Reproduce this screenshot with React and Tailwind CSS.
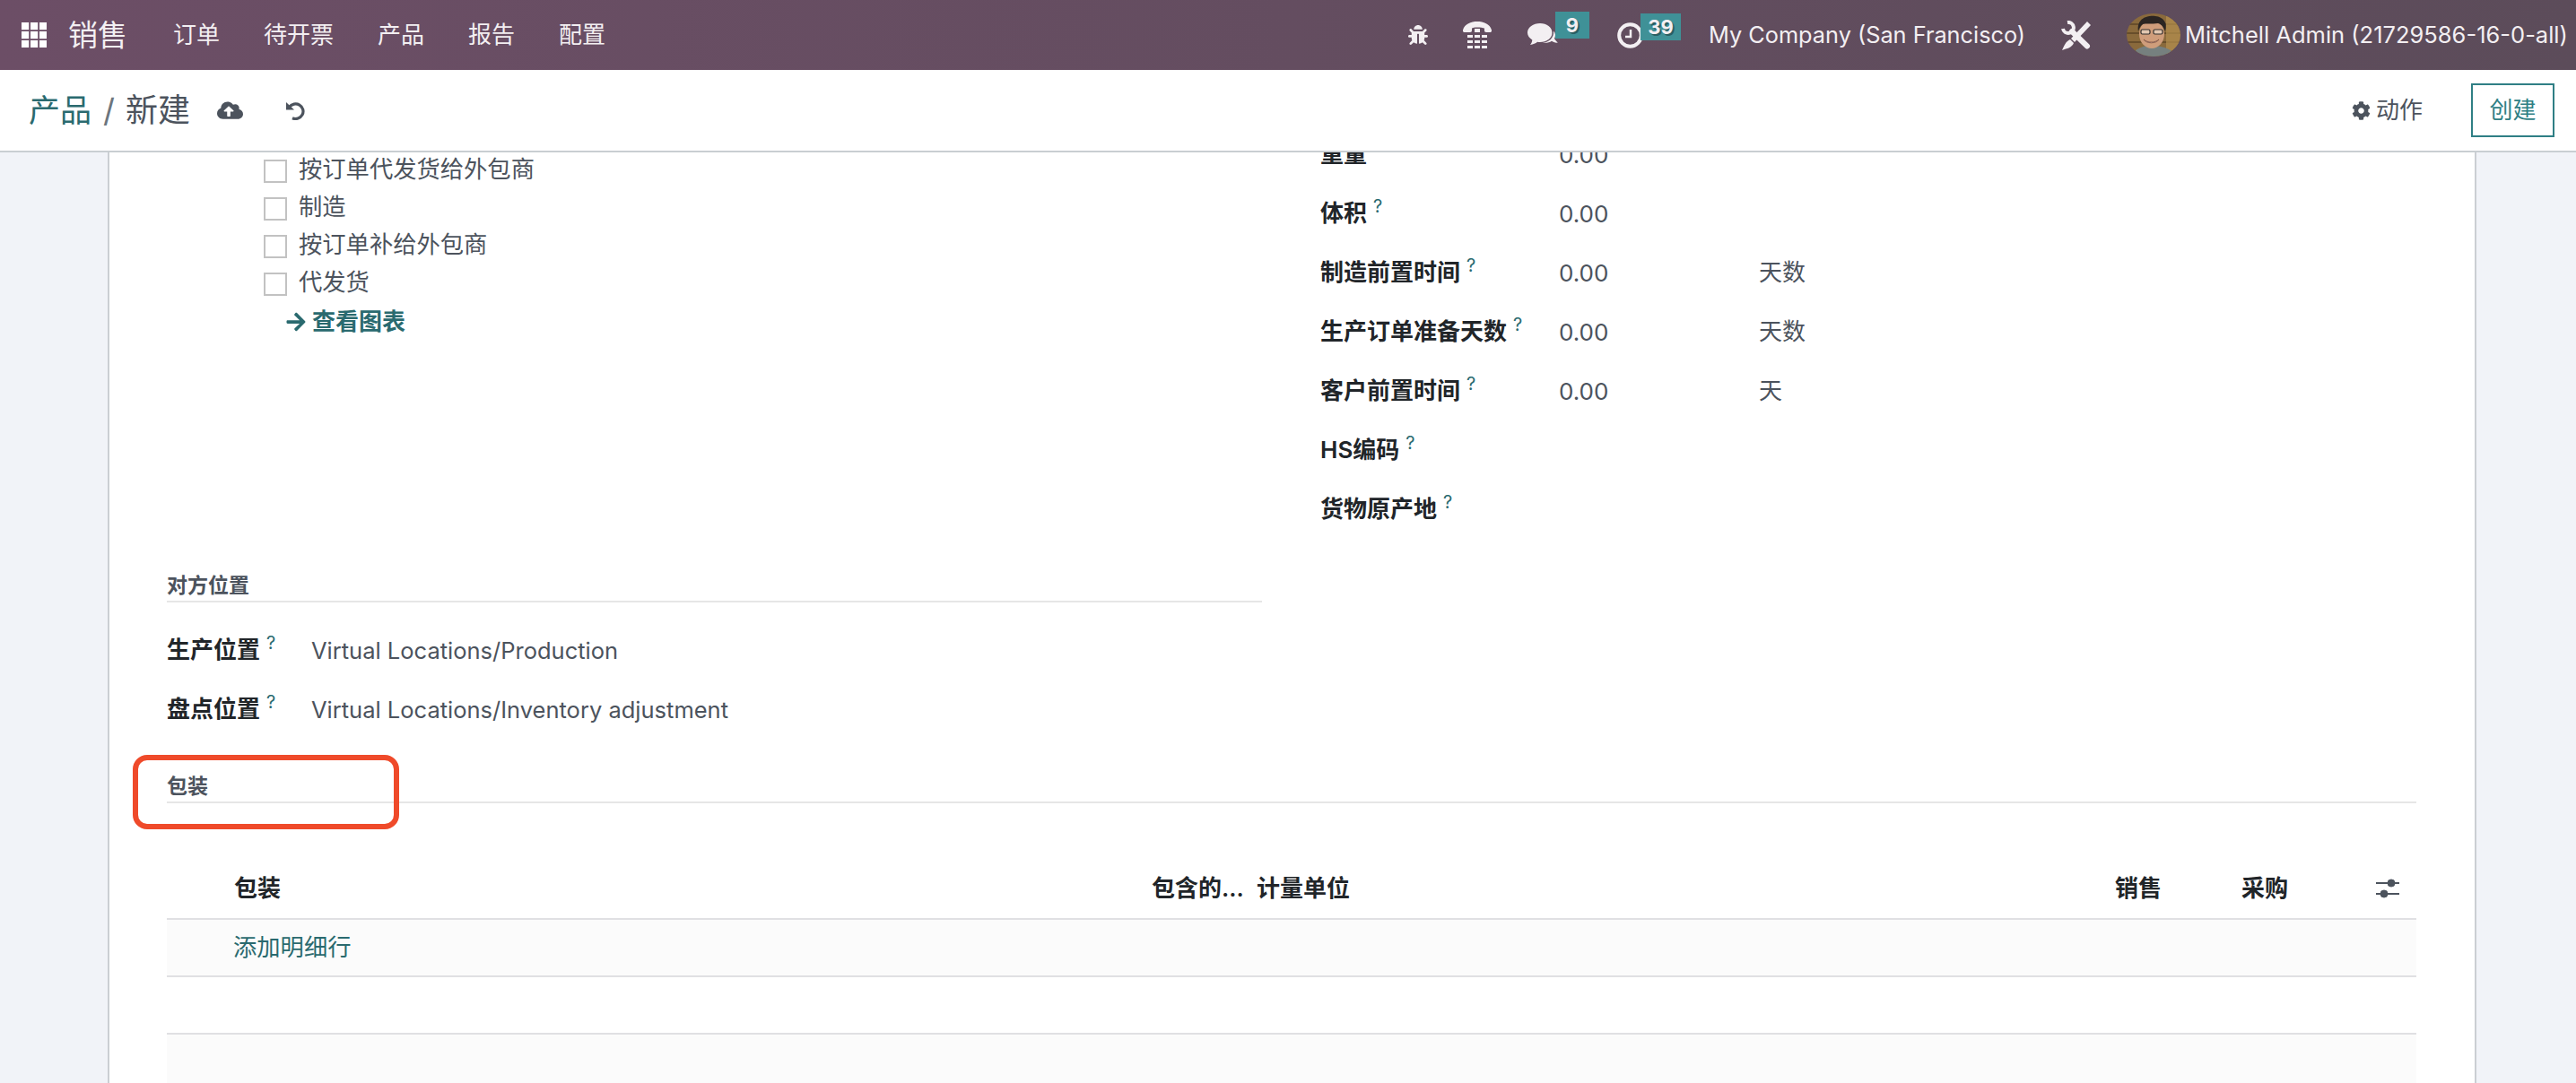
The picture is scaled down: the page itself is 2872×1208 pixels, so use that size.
import React from "react";
import { FaBug, FaCog, FaCloudUploadAlt, FaArrowRight } from "react-icons/fa";

function Help() {
  return <sup className="ml-[7px] text-[20px] font-normal text-[#2a6a6f]">?</sup>;
}

function GridIcon() {
  const cells = [0, 10, 20];
  return (
    <svg width="28" height="28" viewBox="0 0 28 28" fill="#ffffff" className="shrink-0">
      {cells.map((y) => cells.map((x) => <rect key={`${x}-${y}`} x={x} y={y} width="8.200" height="8.200" />))}
    </svg>
  );
}

function PhoneIcon() {
  const xs = [5, 13, 21];
  const ys = [15, 21, 27];
  return (
    <svg width="32" height="30" viewBox="0 0 32 30" fill="#f3eff2" className="shrink-0">
      <path d="M0 9.500C2 2.500 9 0 16 0s14 2.500 16 9.500c.3 1.500-.5 2.500-2 2.500h-4c-1.500 0-2-1-2-2V7.500C21 6 11 6 10 7.500V10c0 1-.5 2-2 2H2c-1.500 0-2.300-1-2-2.500z" />
      <rect x="13" y="8" width="6" height="4" />
      {ys.map((y) => xs.map((x) => <rect key={`${x}-${y}`} x={x} y={y} width="6" height="3" />))}
    </svg>
  );
}

function CommentsIcon() {
  return (
    <svg width="34" height="26" viewBox="0 0 34 26" fill="#f3eff2" className="shrink-0">
      <path d="M14 0C21.500 0 27.500 4.500 27.500 10.500S21.500 21 14 21c-1 0-2-.1-3-.2C9 22.500 6.500 23.500 3 24c1.300-1.500 2.200-3.300 2.300-5.500C2.100 16.500 0 13.700 0 10.500 0 4.500 6.500 0 14 0z" />
      <path d="M29 8.500C31.500 11 31.500 14.500 30 17c1 1.500 2 3 4 4.500-2.500 .5-5-.2-7-1.700-3 2-7 2.500-10 1.700 7-.5 12.500-5 12-12.500z" />
    </svg>
  );
}

function ClockIcon() {
  return (
    <svg width="29" height="29" viewBox="0 0 29 29" fill="none" stroke="#f3eff2" className="shrink-0">
      <circle cx="14.500" cy="14.500" r="12.300" strokeWidth="4" />
      <path d="M15 8v8H9" strokeWidth="2.500" />
    </svg>
  );
}

function ToolsIcon() {
  return (
    <svg width="34" height="33" viewBox="0 0 34 33" className="shrink-0" fill="#f3eff2">
      <path d="M7 2A6 6 0 1 1 2 9" fill="none" stroke="#f3eff2" strokeWidth="4" />
      <path d="M12 12L29 28.500" fill="none" stroke="#f3eff2" strokeWidth="6" strokeLinecap="round" />
      <path d="M29 1L33 5L15 24L11 20Z" />
      <path d="M10 21L14 25C12 30 7 31 1 33C3 29 5 23 10 21Z" />
    </svg>
  );
}

function Avatar() {
  return (
    <svg width="60" height="48" viewBox="0 0 60 48" className="shrink-0">
      <defs>
        <clipPath id="avatarClip"><ellipse cx="30" cy="24" rx="30" ry="24" /></clipPath>
      </defs>
      <g clipPath="url(#avatarClip)">
        <rect width="60" height="48" fill="#8a6a3c" />
        <path d="M0 12H60M0 22H60M0 32H60M0 42H60" stroke="#5d4526" strokeWidth="1.500" />
        <rect x="44" width="16" height="48" fill="#b5904f" opacity="0.7" />
        <path d="M6 48C8 39 18 36 28 36s24 3 26 12z" fill="#76807f" />
        <ellipse cx="28" cy="23" rx="14" ry="16" fill="#cf9d7b" />
        <path d="M13 20C11 6 22 2 32 3c9 1 14 7 11 17-2-5-4-8-8-9-7 1-14 0-17 1-3 2-4 5-5 8z" fill="#2b2522" />
        <rect x="16" y="18" width="10" height="5" rx="1.500" fill="#e2c7b0" stroke="#33302e" strokeWidth="1.200" />
        <rect x="30" y="18" width="10" height="5" rx="1.500" fill="#e2c7b0" stroke="#33302e" strokeWidth="1.200" />
        <path d="M19 29c4 4 13 4 17 0-3 5-14 5-17 0z" fill="#fff" stroke="#7a4a3a" strokeWidth="0.800" />
      </g>
    </svg>
  );
}

function UndoIcon() {
  return (
    <svg width="24" height="21" viewBox="0 0 24 21" fill="none" className="shrink-0">
      <path d="M5.500 6.500A8.500 8.300 0 1 1 9 18.800" stroke="#4c535d" strokeWidth="3.200" />
      <path d="M2 1V9.500H11Z" fill="#4c535d" />
    </svg>
  );
}

function SlidersIcon() {
  return (
    <svg width="26" height="22" viewBox="0 0 26 22" fill="#4c535d" stroke="#4c535d" className="shrink-0">
      <path d="M0 5H26M0 17H26" strokeWidth="2" />
      <circle cx="17" cy="5" r="4" />
      <circle cx="9" cy="17" r="4" />
    </svg>
  );
}

function TopBar() {
  const menus = ["订单", "待开票", "产品", "报告", "配置"];
  return (
    <header className="flex h-[78px] shrink-0 items-center justify-between bg-linear-to-r from-[#6c4e66] to-[#5c4c5a] pl-[24px] pr-[1px] text-[#f3eff2]">
      <div className="flex items-center">
        <GridIcon />
        <span className="ml-[24px] text-[33px] leading-none">销售</span>
        <nav className="ml-[51px] flex gap-[49px] text-[26px] leading-none">
          {menus.map((m) => <span key={m}>{m}</span>)}
        </nav>
      </div>
      <div className="flex items-center">
        <FaBug size={22} />
        <div className="ml-[39px]"><PhoneIcon /></div>
        <div className="relative ml-[40px] flex">
          <CommentsIcon />
          <span className="absolute -top-[13px] left-[31px] flex h-[30px] w-[38px] items-center justify-center bg-[#3f9197] text-[22px] font-bold leading-none [text-shadow:2px_2px_0_#2a5f63]">9</span>
        </div>
        <div className="relative ml-[66px] flex">
          <ClockIcon />
          <span className="absolute -top-[10px] left-[26px] flex h-[30px] w-[45px] items-center justify-center bg-[#3f9197] text-[22px] font-bold leading-none [text-shadow:2px_2px_0_#2a5f63]">39</span>
        </div>
        <span className="ml-[73px] w-[353px] whitespace-nowrap text-[25.300px] leading-none">My Company (San Francisco)</span>
        <div className="ml-[40px]"><ToolsIcon /></div>
        <div className="ml-[39px]"><Avatar /></div>
        <span className="ml-[5px] w-[435px] whitespace-nowrap text-[25.500px] leading-none">Mitchell Admin (21729586-16-0-all)</span>
      </div>
    </header>
  );
}

function Toolbar() {
  return (
    <div className="flex h-[92px] shrink-0 items-center justify-between border-b-2 border-[#c9ced2] bg-white pl-[32px] pr-[24px]">
      <div className="flex items-center">
        <span className="text-[35px] leading-none text-[#2a6a6f]">产品</span>
        <span className="ml-[13px] text-[36px] leading-none text-[#6c757d]">/</span>
        <span className="ml-[12px] text-[36px] leading-none text-[#4c535d]">新建</span>
        <FaCloudUploadAlt className="ml-[30px] text-[#4c535d]" size={29} preserveAspectRatio="none" style={{ height: 22 }} />
        <div className="ml-[46px]"><UndoIcon /></div>
      </div>
      <div className="flex items-center">
        <FaCog className="ml-[2px] text-[#4c535d]" size={21} />
        <span className="ml-[6px] text-[26px] leading-none text-[#4c535d]">动作</span>
        <button className="ml-[54px] flex h-[60px] w-[93px] items-center justify-center border-2 border-[#2f7f85] bg-white text-[26px] leading-none text-[#2f7f85]">创建</button>
      </div>
    </div>
  );
}

function CheckRow({ label }) {
  return (
    <div className="flex h-[42px] items-center pl-[108px]">
      <span className="box-border h-[26px] w-[26px] shrink-0 border-2 border-[#c2c2c2] bg-white" />
      <span className="ml-[13px] pb-[3px] text-[26.300px] leading-none text-[#4c535d]">{label}</span>
    </div>
  );
}

function FieldRow({ label, value, unit }) {
  return (
    <div className="grid h-[66px] grid-cols-[266px_223px_1fr] items-center text-[26px] leading-none">
      <span className="whitespace-nowrap font-semibold text-[#212529]">{label}<Help /></span>
      <span className="pt-[1px] text-[#4c535d]">{value}</span>
      <span className="text-[#4c535d]">{unit}</span>
    </div>
  );
}

function LocationRow({ label, value }) {
  return (
    <div className="grid h-[66px] grid-cols-[161px_1fr] items-center leading-none">
      <span className="whitespace-nowrap text-[26px] font-semibold text-[#212529]">{label}<Help /></span>
      <span className="whitespace-nowrap pt-[1px] text-[25.500px] text-[#4c535d]">{value}</span>
    </div>
  );
}

function SectionTitle({ children }) {
  return (
    <div className="flex h-[36px] items-center border-b-2 border-[#e6e6e6] text-[23px] font-semibold leading-none text-[#4c535d]">
      {children}
    </div>
  );
}

function UpperSection() {
  const fields = [
    { label: "体积", value: "0.00", unit: "" },
    { label: "制造前置时间", value: "0.00", unit: "天数" },
    { label: "生产订单准备天数", value: "0.00", unit: "天数" },
    { label: "客户前置时间", value: "0.00", unit: "天" },
    { label: "HS编码", value: "", unit: "" },
    { label: "货物原产地", value: "", unit: "" },
  ];
  return (
    <div className="flex items-start">
      <div className="w-[1221px] shrink-0">
        <CheckRow label="按订单代发货给外包商" />
        <CheckRow label="制造" />
        <CheckRow label="按订单补给外包商" />
        <CheckRow label="代发货" />
        <div className="flex h-[42px] items-center pl-[132px] text-[#2a6a6f]">
          <FaArrowRight size={24} />
          <span className="ml-[6px] text-[26px] font-semibold leading-none">查看图表</span>
        </div>
        <div className="mt-[256px]"><SectionTitle>对方位置</SectionTitle></div>
        <div className="mt-[20px]">
          <LocationRow label="生产位置" value="Virtual Locations/Production" />
          <LocationRow label="盘点位置" value="Virtual Locations/Inventory adjustment" />
        </div>
      </div>
      <div className="ml-[65px] -mt-[31px] flex-1">
        <div className="grid h-[66px] grid-cols-[266px_223px_1fr] items-center text-[26px] leading-none">
          <span className="font-semibold text-[#212529]">重量</span>
          <span className="pt-[1px] text-[#4c535d]">0.00</span>
          <span />
        </div>
        {fields.map((f) => <FieldRow key={f.label} {...f} />)}
      </div>
    </div>
  );
}

function PackagingTable() {
  return (
    <div className="mt-[62px]">
      <div className="box-content grid h-[66px] grid-cols-[1098px_117px_957px_141px_149px_1fr] items-center border-b-2 border-[#e0e0e3] text-[26px] font-semibold leading-none text-[#212529]">
        <span className="pl-[75px]">包装</span>
        <span>包含的...</span>
        <span>计量单位</span>
        <span>销售</span>
        <span>采购</span>
        <div className="pl-[1px]"><SlidersIcon /></div>
      </div>
      <div className="box-content flex h-[62px] items-center border-b-2 border-[#e0e0e3] bg-[#fbfbfb] pl-[74px] text-[26.300px] leading-none text-[#2a6a6f]">添加明细行</div>
      <div className="box-content h-[62px] border-b-2 border-[#e0e0e3] bg-white" />
      <div className="h-[60px] bg-[#fbfbfb]" />
    </div>
  );
}

export default function App() {
  return (
    <div className="flex h-[1208px] w-[2872px] flex-col overflow-hidden bg-white font-['Inter','Noto_Sans_CJK_SC',sans-serif]">
      <TopBar />
      <Toolbar />
      <main className="flex min-h-0 flex-1 overflow-hidden bg-[#f1f3f8]">
        <div className="relative ml-[120px] box-border w-[2641px] overflow-hidden border-x-2 border-[#cbced3] bg-white pl-[64px] pr-[65px]">
          <UpperSection />
          <div className="mt-[36px]"><SectionTitle>包装</SectionTitle></div>
          <PackagingTable />
          <div className="absolute left-[26px] top-[672px] box-border h-[83px] w-[297px] rounded-[16px] border-[6px] border-[#ef4a2a]" />
        </div>
      </main>
    </div>
  );
}
